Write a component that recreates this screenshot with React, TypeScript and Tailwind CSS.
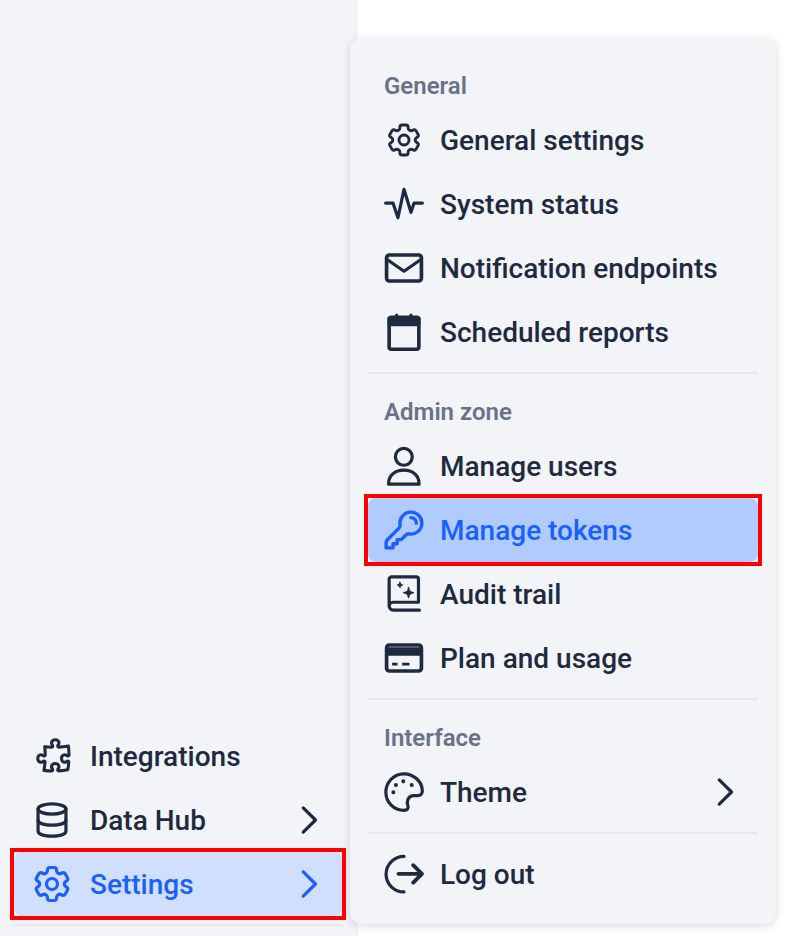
import React from 'react';
import {
  HiOutlineCog6Tooth,
  HiOutlineKey,
  HiOutlinePuzzlePiece,
} from 'react-icons/hi2';

type IconProps = { className?: string };

const Svg: React.FC<{ className?: string; children: React.ReactNode }> = ({ className, children }) => (
  <svg viewBox="0 0 24 24" fill="none" stroke="currentColor" strokeWidth={1.75} strokeLinecap="round" strokeLinejoin="round" className={className}>
    {children}
  </svg>
);

const SmallGear = (_: IconProps) => <HiOutlineCog6Tooth strokeWidth={1.75} className="mx-0.5 h-10 w-10 shrink-0" />;
const BigGear = ({ className }: IconProps) => <HiOutlineCog6Tooth strokeWidth={1.75} className={className} />;
const KeyIcon = ({ className }: IconProps) => <HiOutlineKey strokeWidth={1.85} className={className} />;
const PuzzleIcon = (_: IconProps) => <HiOutlinePuzzlePiece strokeWidth={1.85} className="mx-0.5 h-10 w-10 shrink-0 translate-x-0.5" />;

const ChevronIcon = ({ className }: IconProps) => (
  <Svg className={className}>
    <path d="M9.400 5.400L16.100 12L9.400 18.600" />
  </Svg>
);

const DatabaseIcon = ({ className }: IconProps) => (
  <Svg className={className}>
    <ellipse cx="12" cy="6" rx="7.600" ry="2.800" />
    <path d="M4.400 6v12c0 1.900 3.400 2.800 7.600 2.800s7.600-.9 7.600-2.800V6" />
    <path d="M4.400 12c0 1.900 3.400 2.800 7.600 2.800s7.600-.9 7.600-2.800" />
  </Svg>
);

const PulseIcon = ({ className }: IconProps) => (
  <Svg className={className}>
    <path d="M2 11.500H6L8.700 19.500L12 4L15.800 16.500L17.500 11.500H22" />
  </Svg>
);

const EnvelopeIcon = ({ className }: IconProps) => (
  <Svg className={className}>
    <rect x="2.500" y="4.900" width="19" height="14.200" rx="1.500" strokeWidth={2} />
    <path d="M3 7.500L12 13.800L21 7.500" />
  </Svg>
);

const CalendarIcon = ({ className }: IconProps) => (
  <Svg className={className}>
    <path d="M8 2.800V4M15.800 2.800V4" />
    <rect x="3.900" y="4" width="16.200" height="17.400" rx="1.200" strokeWidth={2} />
    <path d="M3.900 4.500h16.200v3.500H3.900z" fill="currentColor" />
  </Svg>
);

const UserIcon = ({ className }: IconProps) => (
  <Svg className={className}>
    <circle cx="11.900" cy="7" r="4.600" />
    <path d="M3.600 21.900v-.4c0-4.500 3.600-7.200 8.300-7.200s8.300 2.700 8.300 7.200v.4z" />
  </Svg>
);

const BookIcon = ({ className }: IconProps) => (
  <Svg className={className}>
    <path d="M3.900 18.500V4a1.300 1.300 0 0 1 1.300-1.300h13.400A1.300 1.300 0 0 1 19.900 4v12.500H6a2.100 2.100 0 0 0-2.100 2.100 2.200 2.200 0 0 0 2.200 2.200h14.300" />
    <path d="M14.500 8.300l.8 2.200 2.200.8-2.200.8-.8 2.200-.8-2.200-2.200-.8 2.200-.8z" fill="currentColor" strokeWidth={0.4} />
    <path d="M9.800 5.500l.5 1.100 1.100.5-1.100.5-.5 1.100-.5-1.100-1.100-.5 1.100-.5z" fill="currentColor" strokeWidth={0.4} />
  </Svg>
);

const CardIcon = ({ className }: IconProps) => (
  <Svg className={className}>
    <rect x="2.500" y="4.900" width="19" height="14.200" rx="1.500" strokeWidth={2} />
    <path d="M2.600 7h18.800v2.900H2.600z" fill="currentColor" />
    <path d="M5.500 15.400h3M11 15.400h4" strokeLinecap="butt" strokeWidth={1.500} />
  </Svg>
);

const PaletteIcon = ({ className }: IconProps) => (
  <Svg className={className}>
    <path d="M12 2.100C6.100 2.100 2.100 7 2.100 12.200 2.100 17.700 6.500 22 12 22c2 0 2.600-1.400 2.100-2.700-.6-1.700-.3-4.700 2.700-5.300h2.700c1.500 0 2.500-1 2.500-2.500C22 6.500 17.500 2.100 12 2.100z" />
    <circle cx="7.600" cy="8.200" r="0.700" fill="currentColor" strokeWidth={0.8} />
    <circle cx="11.600" cy="6.200" r="0.700" fill="currentColor" strokeWidth={0.8} />
    <circle cx="16.200" cy="8.200" r="0.700" fill="currentColor" strokeWidth={0.8} />
    <circle cx="6.200" cy="12.200" r="0.700" fill="currentColor" strokeWidth={0.8} />
  </Svg>
);

const LogoutIcon = ({ className }: IconProps) => (
  <Svg className={className}>
    <path d="M12 2.400A9.800 9.800 0 0 0 2.200 12.100 9.800 9.800 0 0 0 12 21.800" />
    <path d="M9 11.900H21.500M17 7.200L21.800 11.900L17 16.700" strokeWidth={2.100} />
  </Svg>
);

const items = {
  general: [
    { label: 'General settings', Icon: SmallGear },
    { label: 'System status', Icon: PulseIcon },
    { label: 'Notification endpoints', Icon: EnvelopeIcon },
    { label: 'Scheduled reports', Icon: CalendarIcon },
  ],
  admin: [
    { label: 'Manage users', Icon: UserIcon },
    { label: 'Manage tokens', Icon: KeyIcon, active: true },
    { label: 'Audit trail', Icon: BookIcon },
    { label: 'Plan and usage', Icon: CardIcon },
  ],
};

const RedBox = () => <span className="absolute -inset-1 border-4 border-[#ff0000]" />;

const MenuRow: React.FC<{ label: string; Icon: React.ComponentType<IconProps>; active?: boolean; chevron?: boolean }> = ({ label, Icon, active, chevron }) => (
  <div className={`relative flex h-16 items-center gap-3.5 rounded-lg px-3.5 ${active ? 'bg-[#b0cbff] text-[#1a5fff]' : 'text-[#1e2a3f]'}`}>
    <Icon className="h-11 w-11 shrink-0" />
    <span className="flex-1 pt-0.5">{label}</span>
    {chevron && <ChevronIcon className="mr-[-2px] h-11 w-11 shrink-0" />}
    {active && <RedBox />}
  </div>
);

const Heading: React.FC<{ children: React.ReactNode }> = ({ children }) => (
  <div className="px-4 pt-2 text-2xl leading-[44px] font-semibold text-[#697289]">{children}</div>
);

const Divider = () => <div className="my-2 h-0.5 bg-[#e5e7ec]" />;

const SideRow: React.FC<{ label: string; Icon: React.ComponentType<IconProps>; active?: boolean; chevron?: boolean }> = ({ label, Icon, active, chevron }) => (
  <div className={`relative flex h-16 items-center gap-4 rounded-lg pr-3 pl-4 ${active ? 'bg-[#cfdffd] text-[#1a5fff]' : 'text-[#1e2a3f]'}`}>
    <Icon className="h-11 w-11 shrink-0" />
    <span className="flex-1 pt-0.5">{label}</span>
    {chevron && <ChevronIcon className="h-11 w-11 shrink-0" />}
    {active && <RedBox />}
  </div>
);

export default function App() {
  return (
    <div className="relative h-[936px] w-[800px] overflow-hidden bg-white font-['Roboto',sans-serif] text-[28px] font-medium">
      <aside className="flex h-full w-[358px] flex-col justify-end bg-[#f2f4f8] pr-4 pb-2.5 pl-3.5">
        <SideRow label="Integrations" Icon={PuzzleIcon} />
        <SideRow label="Data Hub" Icon={DatabaseIcon} chevron />
        <SideRow label="Settings" Icon={BigGear} chevron active />
        <div className="mt-2 h-0.5 bg-[#e5e7ec]" />
      </aside>

      <div className="absolute top-[38px] left-[350px] w-[426px] rounded-xl bg-[#f2f4f8] p-[18px] shadow-[0_2px_8px_rgba(30,41,59,0.18)]">
        <Heading>General</Heading>
        {items.general.map(i => <MenuRow key={i.label} {...i} />)}
        <Divider />
        <Heading>Admin zone</Heading>
        {items.admin.map(i => <MenuRow key={i.label} {...i} />)}
        <Divider />
        <Heading>Interface</Heading>
        <MenuRow label="Theme" Icon={PaletteIcon} chevron />
        <Divider />
        <MenuRow label="Log out" Icon={LogoutIcon} />
      </div>
    </div>
  );
}
